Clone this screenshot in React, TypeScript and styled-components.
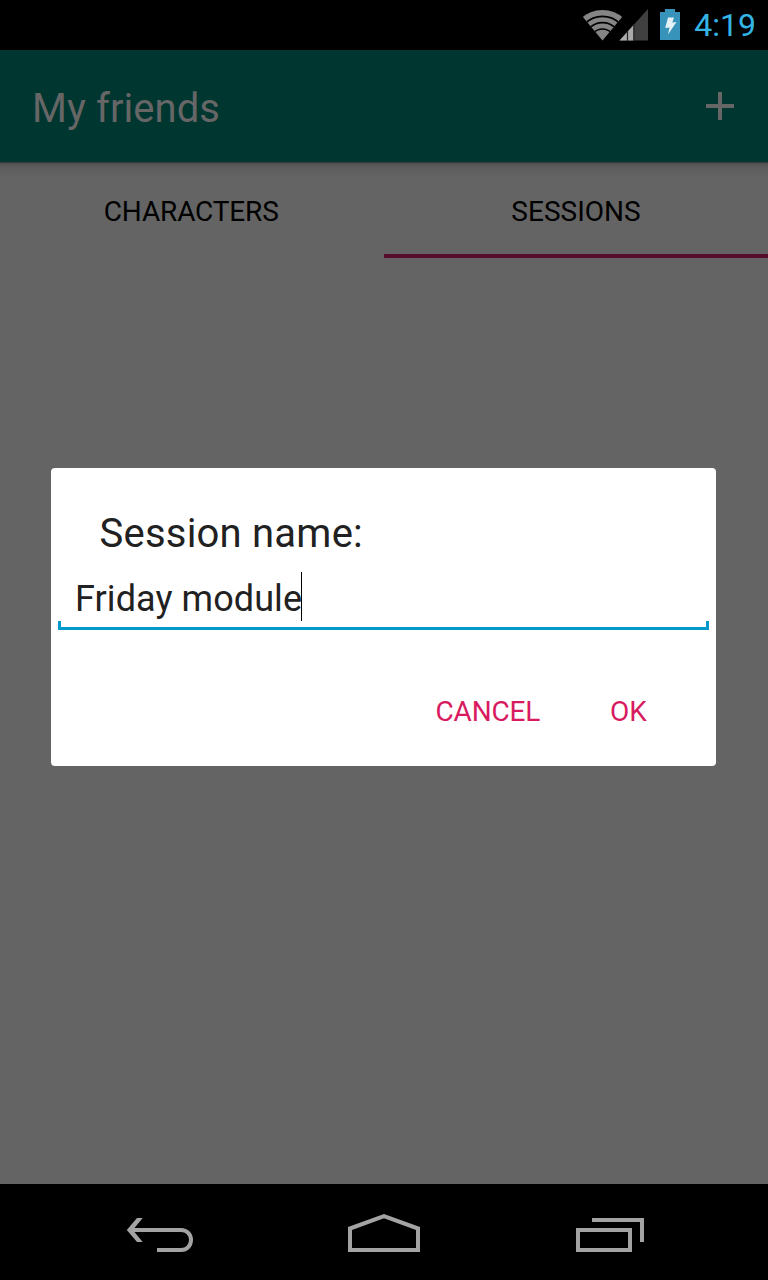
import React from 'react';
import styled, { createGlobalStyle } from 'styled-components';

const GlobalStyle = createGlobalStyle`
  * { box-sizing: border-box; }
  body { margin: 0; background: #000; font-family: Roboto, sans-serif; }
`;

const Screen = styled.div`
  display: flex;
  flex-direction: column;
  width: 768px;
  height: 1280px;
  overflow: hidden;
  background: #000;
`;

const StatusBar = styled.header`
  display: flex;
  align-items: flex-start;
  justify-content: flex-end;
  height: 50px;
  padding: 0 12px 0 0;
  color: #33b5e5;
  svg { display: block; flex: none; }
`;

const Clock = styled.time`
  margin: 0 0 0 13px;
  font-size: 32px;
  line-height: 50px;
  white-space: nowrap;
`;

const Activity = styled.main`
  position: relative;
  display: flex;
  flex-direction: column;
  flex: 1;
  background: #646464;
`;

const Toolbar = styled.div`
  display: flex;
  align-items: center;
  justify-content: space-between;
  height: 112px;
  padding: 0 34px 0 32px;
  background: #003630;
  color: #666;
`;

const Title = styled.h1`
  margin: 6px 0 0;
  font-size: 40px;
  font-weight: 400;
  line-height: 48px;
  white-space: nowrap;
`;

const Tabs = styled.nav`
  display: flex;
  height: 96px;
  background: linear-gradient(#333 0, #484848 1px, #545454 2px, #5a5a5a 4px, #606060 9px, #646464 16px);
`;

const Tab = styled.div<{ $active?: boolean }>`
  flex: 0 0 50%;
  padding-top: 33px;
  padding-right: ${(p) => (p.$active ? 0 : 1.5)}px;
  border-bottom: 4px solid ${(p) => (p.$active ? '#570d29' : 'transparent')};
  color: #000;
  font-size: 28px;
  line-height: 33px;
  text-align: center;
`;

const Label = styled.span<{ $spacing?: number }>`
  letter-spacing: ${(p) => p.$spacing ?? 0}px;
`;

const ModalLayer = styled.div`
  position: absolute;
  inset: 0;
  display: flex;
  align-items: center;
  justify-content: center;
  padding-right: 1px;
`;

const Dialog = styled.section`
  display: flex;
  flex-direction: column;
  width: 665px;
  height: 298px;
  padding: 42px 7px 0;
  border-radius: 4px;
  background: #fff;
  color: #212121;
`;

const DialogTitle = styled.h2`
  margin: 0 0 0 41.5px;
  font-size: 40px;
  font-weight: 400;
  line-height: 48px;
  white-space: nowrap;
`;

const Field = styled.div`
  display: flex;
  flex-direction: column;
  margin-top: 14px;
`;

const FieldText = styled.div`
  display: flex;
  align-items: center;
  height: 49px;
  padding: 6px 0 0 17px;
  font-size: 36px;
  line-height: 45px;
  white-space: nowrap;
`;

const Caret = styled.i`
  width: 1px;
  height: 49px;
  margin: -6px 0 0 -1px;
  background: #000;
`;

const Underline = styled.div`
  height: 9px;
  border: solid #0099cc;
  border-width: 0 3px 3px;
`;

const Actions = styled.div`
  display: flex;
  justify-content: flex-end;
  gap: 70px;
  margin-top: 65px;
  padding-right: 62.5px;
`;

const Action = styled.button`
  padding: 0;
  border: 0;
  background: none;
  color: #d81b60;
  font: 28px/33px Roboto, sans-serif;
  white-space: nowrap;
`;

const NavBar = styled.footer`
  height: 96px;
  background: #000;
  svg { display: block; }
`;

const StatusIcons = () => (
  <svg width="100" height="50" viewBox="581 0 100 50">
    <defs>
      <clipPath id="fan">
        <path d="M602.5 40.5 L582.5 16.5 V9 H622.5 V16.5Z" />
      </clipPath>
    </defs>
    <g clipPath="url(#fan)">
      <circle cx="602.5" cy="41" r="31" fill="#858585" />
      <g fill="none" stroke="#000" strokeWidth="1.6">
        <circle cx="602.5" cy="41" r="24.6" />
        <circle cx="602.5" cy="41" r="18.4" />
        <circle cx="602.5" cy="41" r="12" />
      </g>
    </g>
    <path d="M619.5 40.5 L648 9 V40.5Z" fill="#404040" />
    <path d="M619.5 40.5 L634 24.5 V40.5Z" fill="#aaa" />
    <path d="M627.5 31V41M633.8 24V41" stroke="#222" strokeWidth="1.2" />
    <path d="M660 12H665V9H675V12H680V40H660Z" fill="#3793b9" />
    <path d="M668 17.5H674L672.3 22.5L676.5 22L668 34.5L669.5 27.5L665.2 28Z" fill="#e4f1f6" />
  </svg>
);

const PlusIcon = () => (
  <svg width="28" height="28" viewBox="0 0 28 28">
    <path d="M14 0V28M0 14H28" stroke="#666" strokeWidth="4" />
  </svg>
);

const NavIcons = () => (
  <svg width="768" height="96" viewBox="0 1184 768 96" fill="none" stroke="#a3a3a3" strokeWidth="4">
    <path d="M130 1230H181C187 1230 191 1234.5 191 1240S187 1250 181 1250H157" />
    <path d="M126.8 1230L137 1218H142.7L132.8 1230L142.7 1242H137Z" fill="#a3a3a3" stroke="none" />
    <path d="M350 1250V1228.5L384 1216.2L418 1228.5V1250Z" />
    <path d="M578 1230H630V1250H578ZM592 1220H642V1242" />
  </svg>
);

export default function App() {
  return (
    <>
      <GlobalStyle />
      <Screen>
        <StatusBar>
          <StatusIcons />
          <Clock><Label>4:19</Label></Clock>
        </StatusBar>
        <Activity>
          <Toolbar>
            <Title><Label $spacing={0.05}>My friends</Label></Title>
            <PlusIcon />
          </Toolbar>
          <Tabs>
            <Tab><Label $spacing={-0.15}>CHARACTERS</Label></Tab>
            <Tab $active><Label>SESSIONS</Label></Tab>
          </Tabs>
          <ModalLayer>
            <Dialog role="dialog">
              <DialogTitle><Label $spacing={0.22}>Session name:</Label></DialogTitle>
              <Field>
                <FieldText><Label $spacing={0.08}>Friday module</Label><Caret /></FieldText>
                <Underline />
              </Field>
              <Actions>
                <Action><Label $spacing={-0.2}>CANCEL</Label></Action>
                <Action><Label $spacing={-0.2}>OK</Label></Action>
              </Actions>
            </Dialog>
          </ModalLayer>
        </Activity>
        <NavBar><NavIcons /></NavBar>
      </Screen>
    </>
  );
}
